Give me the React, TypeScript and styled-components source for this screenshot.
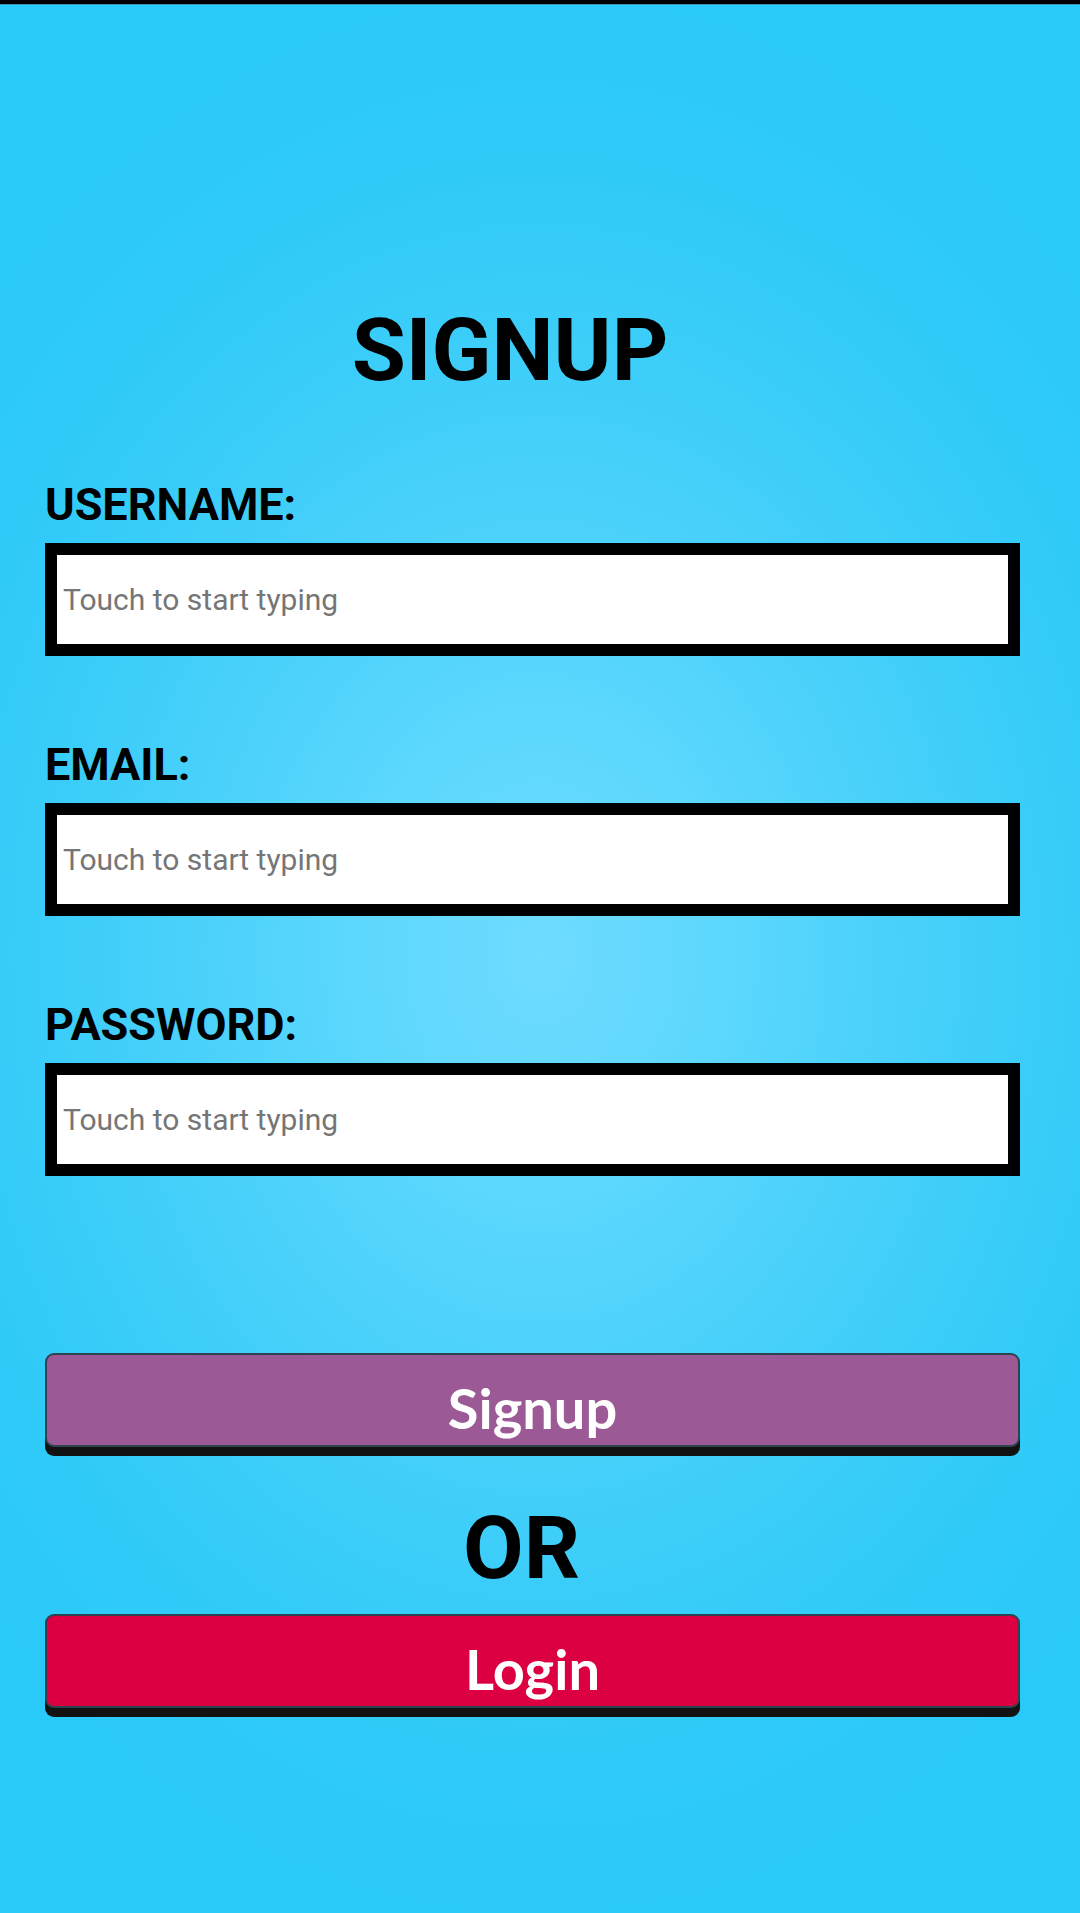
import React, { useState } from 'react';
import styled, { createGlobalStyle } from 'styled-components';

const GlobalStyle = createGlobalStyle`
  html, body {
    margin: 0;
    padding: 0;
  }
  body {
    font-family: Roboto, "Liberation Sans", sans-serif;
  }
`;

const Screen = styled.div`
  width: 1080px;
  min-height: 1913px;
  display: flex;
  flex-direction: column;
  align-items: stretch;
  box-sizing: border-box;
  border-top: 4px solid #000;
  background: radial-gradient(
    ellipse 760px 980px at 540px 950px,
    #6edbff 0%,
    #5cd7fd 25%,
    #46d0fa 50%,
    #33cbf8 75%,
    #29c9f8 100%
  );
`;

const TopLine = styled.div`
  height: 1px;
  background-color: #3b97b3;
`;

const Form = styled.div`
  display: flex;
  flex-direction: column;
  padding: 301px 60px 0 45px;
`;

const Title = styled.h1`
  margin: 0;
  padding-right: 45px;
  text-align: center;
  font-family: Roboto, "Liberation Sans", sans-serif;
  font-weight: 700;
  font-size: 88px;
  line-height: 88px;
  color: #000;
`;

const Field = styled.div`
  display: flex;
  flex-direction: column;
  margin-top: ${props => props.first ? "88px" : "86px"};
`;

const Label = styled.label`
  font-family: Roboto, "Liberation Sans", sans-serif;
  font-weight: 700;
  font-size: 45px;
  line-height: 46px;
  color: #000;
  margin-bottom: 15px;
`;

const Input = styled.input`
  box-sizing: border-box;
  width: 100%;
  height: 113px;
  margin: 0;
  border: 12px solid #000;
  border-radius: 0;
  background-color: #fff;
  padding: 0 6px;
  font-family: Roboto, "Liberation Sans", sans-serif;
  font-size: 30px;
  color: #222;
  outline: none;
  &::placeholder {
    color: #767676;
  }
`;

const Button = styled.div`
  box-sizing: border-box;
  height: 94px;
  display: flex;
  align-items: center;
  justify-content: center;
  padding-top: 15px;
  border: 2px solid #2d4450;
  border-radius: 9px;
  background-color: ${props => props.color};
  box-shadow: 0 9px 0 #121212;
  color: #fff;
  font-family: Lato, "Open Sans", sans-serif;
  font-weight: 700;
  font-size: 56px;
  line-height: 1;
  margin-top: ${props => props.top};
  cursor: pointer;
`;

const Or = styled.div`
  margin-top: 57px;
  padding-right: 22px;
  text-align: center;
  font-family: Roboto, "Liberation Sans", sans-serif;
  font-weight: 700;
  font-size: 88px;
  line-height: 88px;
  color: #000;
`;

function App() {
  const [username, setUsername] = useState<string>("");
  const [email, setEmail] = useState<string>("");
  const [password, setPassword] = useState<string>("");
  return (
    <>
      <GlobalStyle />
      <Screen>
        <TopLine />
        <Form>
          <Title>SIGNUP</Title>
          <Field first>
            <Label>USERNAME:</Label>
            <Input placeholder="Touch to start typing" value={username} onChange={(e) => setUsername(e.target.value)} />
          </Field>
          <Field>
            <Label>EMAIL:</Label>
            <Input placeholder="Touch to start typing" value={email} onChange={(e) => setEmail(e.target.value)} />
          </Field>
          <Field>
            <Label>PASSWORD:</Label>
            <Input type="password" placeholder="Touch to start typing" value={password} onChange={(e) => setPassword(e.target.value)} />
          </Field>
          <Button color="#9b5a96" top="177px">Signup</Button>
          <Or>OR</Or>
          <Button color="#dc0043" top="22px">Login</Button>
        </Form>
      </Screen>
    </>
  );
}

export default App;
